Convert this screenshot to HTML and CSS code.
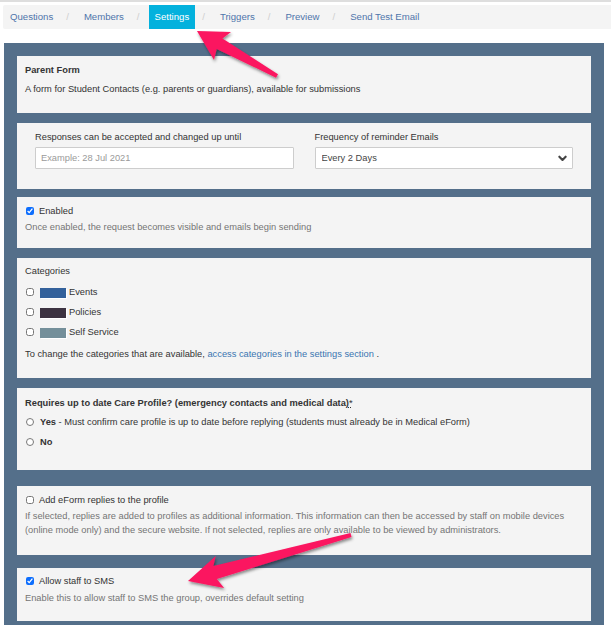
FILE: index.html
```html
<!doctype html>
<html lang="en">
  <head>
    <meta charset="UTF-8" />
    <meta name="viewport" content="width=device-width, initial-scale=1.0" />
    <title>eForm Settings</title>
    <link rel="stylesheet" href="styles.css">
  </head>
  <body>
    <div class="topline"></div>

    <nav class="crumbs">
      <a href="#">Questions</a><span class="sep">/</span>
      <a href="#">Members</a><span class="sep">/</span>
      <a href="#" class="active">Settings</a><span class="sep">/</span>
      <a href="#">Triggers</a><span class="sep">/</span>
      <a href="#">Preview</a><span class="sep">/</span>
      <a href="#">Send Test Email</a>
    </nav>

    <main class="panel">
      <section class="card">
        <div class="title">Parent Form</div>
        <p class="text">A form for Student Contacts (e.g. parents or guardians), available for submissions</p>
      </section>

      <section class="card card-form gap-md">
        <div class="field">
          <label>Responses can be accepted and changed up until</label>
          <input type="text" class="control" placeholder="Example: 28 Jul 2021" />
        </div>
        <div class="field">
          <label>Frequency of reminder Emails</label>
          <div class="select-wrap">
            <select class="control">
              <option>Every 2 Days</option>
              <option>Every Day</option>
              <option>Every Week</option>
            </select>
            <svg class="chevron" viewBox="0 0 8 6" fill="none" stroke="currentColor" stroke-width="1.9" stroke-linecap="round" stroke-linejoin="round">
              <path d="M1.2 1.4 L4 4.3 L6.8 1.4"></path>
            </svg>
          </div>
        </div>
      </section>

      <section class="card card-enabled gap-sm">
        <label class="check"><input type="checkbox" checked /> Enabled</label>
        <p class="help">Once enabled, the request becomes visible and emails begin sending</p>
      </section>

      <section class="card card-cats gap-md">
        <div>Categories</div>
        <label class="check cat first"><input type="checkbox" /><span class="swatch swatch-events"></span>Events</label>
        <label class="check cat"><input type="checkbox" /><span class="swatch swatch-policies"></span>Policies</label>
        <label class="check cat"><input type="checkbox" /><span class="swatch swatch-self"></span>Self Service</label>
        <p class="text cats-note">To change the categories that are available, <a href="#">access categories in the settings section</a> .</p>
      </section>

      <section class="card card-radios gap-md">
        <div class="title">Requires up to date Care Profile? (emergency contacts and medical data)<abbr title="Required">*</abbr></div>
        <label class="check radio first"><input type="radio" name="care" /><span><b>Yes</b> - Must confirm care profile is up to date before replying (students must already be in Medical eForm)</span></label>
        <label class="check radio"><input type="radio" name="care" /><b>No</b></label>
      </section>

      <section class="card card-profile gap-lg">
        <label class="check"><input type="checkbox" /> Add eForm replies to the profile</label>
        <p class="help">If selected, replies are added to profiles as additional information. This information can then be accessed by staff on mobile devices (online mode only) and the secure website. If not selected, replies are only available to be viewed by administrators.</p>
      </section>

      <section class="card card-sms gap-lg2">
        <label class="check"><input type="checkbox" checked /> Allow staff to SMS</label>
        <p class="help">Enable this to allow staff to SMS the group, overrides default setting</p>
      </section>
    </main>

    <svg class="arrows" viewBox="0 0 611 625">
      <defs>
        <filter id="shade" x="-20%" y="-20%" width="140%" height="140%">
          <feDropShadow dx="1" dy="2" stdDeviation="1.6" flood-color="#000" flood-opacity="0.45" />
        </filter>
      </defs>
      <polygon filter="url(#shade)" points="197,31 231,32 222.5,38.5 278,74.3 276,77.7 216.7,48.9 214,60"></polygon>
      <polygon filter="url(#shade)" points="188,581 215.7,556 213.4,566 350.5,533.1 351.5,536.9 216.8,579 224.1,588"></polygon>
    </svg>
  </body>
</html>
```

FILE: styles.css
```css
* {
  box-sizing: border-box;
}

body {
  margin: 0;
  position: relative;
  font-family: 'Liberation Sans', Arial, sans-serif;
  font-size: 9.3px;
  line-height: 14px;
  color: #333;
  background: #fff;
}

.topline {
  height: 2px;
  background: #dedede;
}

/* breadcrumb tabs */
.crumbs {
  display: flex;
  height: 24px;
  margin: 3px 0 0 3px;
  padding-left: 1px;
  background: #f4f4f4;
  border-radius: 2px 0 0 2px;
  font-size: 9.6px;
}

.crumbs a {
  display: flex;
  align-items: center;
  padding: 0 6px;
  color: #4f74ab;
  text-decoration: none;
}

.crumbs a.active {
  background: #03b1dd;
  color: #fff;
}

.crumbs .sep {
  display: flex;
  align-items: center;
  margin: 0 9px 0 7px;
  color: #cfcfcf;
}

/* settings panel */
.panel {
  width: 600px;
  margin: 14px 0 0 4px;
  padding: 13px 13px 20px;
  background: #546f8a;
}

.card {
  background: #f4f4f4;
  padding: 7px 8px 17px;
}

.gap-sm { margin-top: 8px; }
.gap-md { margin-top: 10px; }
.gap-lg { margin-top: 16px; }
.gap-lg2 { margin-top: 13px; }

.title {
  font-weight: bold;
}

.title abbr {
  text-decoration: underline dotted;
  font-weight: normal;
}

.text {
  margin: 5px 0 0;
}

.text a {
  color: #3a74b1;
  text-decoration: none;
}

.help {
  margin: 2px 0 0;
  color: #747474;
}

/* date + reminder fields */
.card-form {
  display: grid;
  grid-template-columns: 1fr 1fr;
  column-gap: 21px;
  padding: 7px 18px 20px;
}

.field label {
  display: block;
  margin-bottom: 3px;
}

.control {
  display: block;
  width: 100%;
  height: 22px;
  margin: 0;
  padding: 0 5px;
  border: 1px solid #cdcdcd;
  border-radius: 1px;
  background: #fff;
  font-family: inherit;
  font-size: 9.3px;
  color: #444;
  outline: none;
}

.control::placeholder {
  color: #9a9a9a;
}

select.control {
  appearance: none;
  padding-left: 6px;
}

.select-wrap {
  position: relative;
}

.chevron {
  position: absolute;
  right: 6px;
  top: 8px;
  width: 9px;
  height: 7px;
  color: #444;
  pointer-events: none;
}

/* checkbox / radio rows */
.check {
  display: flex;
  align-items: center;
  gap: 5px;
}

.check input {
  width: 8px;
  height: 8px;
  margin: 0 0 0 1px;
  accent-color: #0d6efd;
}

.card-enabled {
  padding-bottom: 14px;
}

.card-cats {
  padding-top: 6px;
}

.cat {
  gap: 0;
  margin-top: 6px;
}

.cat.first {
  margin-top: 7px;
}

.swatch {
  width: 26px;
  height: 10px;
  margin: 1px 3px 0 6px;
  box-shadow: 1px 1px 0 #fff;
}

.swatch-events { background: #33619b; }
.swatch-policies { background: #3c3241; }
.swatch-self { background: #748f9a; }

.cats-note {
  margin-top: 8px;
}

.card-radios {
  padding-top: 8px;
  padding-bottom: 21px;
}

.radio {
  gap: 6px;
  margin-top: 6px;
}

.radio.first {
  margin-top: 5px;
}

.radio input {
  accent-color: #666;
}

.card-profile {
  padding-bottom: 18px;
}

.card-profile .help {
  margin-top: 3px;
  line-height: 13.5px;
}

.card-sms {
  padding-top: 6px;
  padding-bottom: 16px;
}

.card-sms .help {
  margin-top: 3px;
}

/* pink pointer arrows */
.arrows {
  position: absolute;
  top: 0;
  left: 0;
  width: 611px;
  height: 625px;
  fill: #fb1560;
  pointer-events: none;
}
```
